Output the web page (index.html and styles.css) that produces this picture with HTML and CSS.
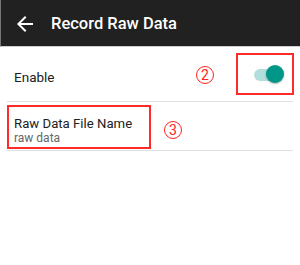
FILE: index.html
```html
<!DOCTYPE html>
<html>
<head>
<meta charset="utf-8">
<link rel="stylesheet" href="styles.css">
</head>
<body>
<header class="appbar">
  <svg class="back" width="24" height="24" viewBox="0 0 24 24"><path d="M20 11H7.83l5.59-5.59L12 4l-8 8 8 8 1.41-1.41L7.83 13H20v-2z" fill="#fff"/></svg>
  <h1 class="title">Record Raw Data</h1>
</header>
<main class="list">
  <div class="row row-enable">
    <span class="label">Enable</span>
    <span class="marker marker-2">2</span>
    <div class="switch-box">
      <div class="switch"><span class="track"></span><span class="thumb"></span></div>
    </div>
  </div>
  <div class="row row-file">
    <div class="file-box">
      <div class="name">Raw Data File Name</div>
      <div class="sub">raw data</div>
    </div>
    <span class="marker marker-3">3</span>
  </div>
</main>
</body>
</html>
```
FILE: styles.css
```css
html, body { margin: 0; padding: 0; background: #fff; }
body { font-family: Roboto, "Noto Sans", sans-serif; width: 300px; height: 265px; overflow: hidden; }
.appbar {
  height: 46px;
  background: #212121;
  display: flex;
  align-items: center;
  border-left: 1px solid #777;
  border-bottom: 1px solid #cfcfcf;
}
.back { margin-left: 12px; width: 24px; height: 24px; margin-top: 1px; }
.title { margin: 1px 0 0 14px; color: #fff; font-size: 16.5px; font-weight: 500; }
.list { margin: 0 7px; }
.row { display: flex; align-items: center; border-bottom: 1px solid #e0e0e0; }
.row-enable { height: 54px; }
.row-enable .label { margin-left: 7px; font-size: 13.5px; color: #212121; flex: 1; padding-top: 5px; }
.marker {
  width: 18px; height: 18px; border: 1.3px solid #f22; border-radius: 50%;
  color: #f22; font-size: 14px; line-height: 16px; text-align: center;
  display: inline-block; box-sizing: border-box;
}
.marker-2 { margin-right: 22px; margin-top: 1px; }
.switch-box {
  width: 58px; height: 42px; border: 2px solid #ff2a2a; box-sizing: border-box;
  display: flex; align-items: center; justify-content: flex-end; margin-right: -1px;
}
.switch { position: relative; width: 30px; height: 20px; margin-right: 8px; }
.track { position: absolute; left: 0; top: 5px; width: 26px; height: 12px; border-radius: 6px; background: #b2dfdb; }
.thumb { position: absolute; right: 0; top: 1px; width: 18px; height: 18px; border-radius: 50%; background: #009688; box-shadow: 0 1px 2px rgba(0,0,0,0.3); }
.row-file { height: 48px; }
.file-box {
  width: 144px; height: 44px; border: 2px solid #ff2a2a; box-sizing: border-box;
  padding: 9px 0 0 5px; margin-top: 1px;
}
.name { font-size: 13.2px; color: #212121; line-height: 15px; }
.sub { font-size: 12px; color: #666; line-height: 15px; }
.marker-3 { margin-left: 13px; margin-top: 8px; }
```
